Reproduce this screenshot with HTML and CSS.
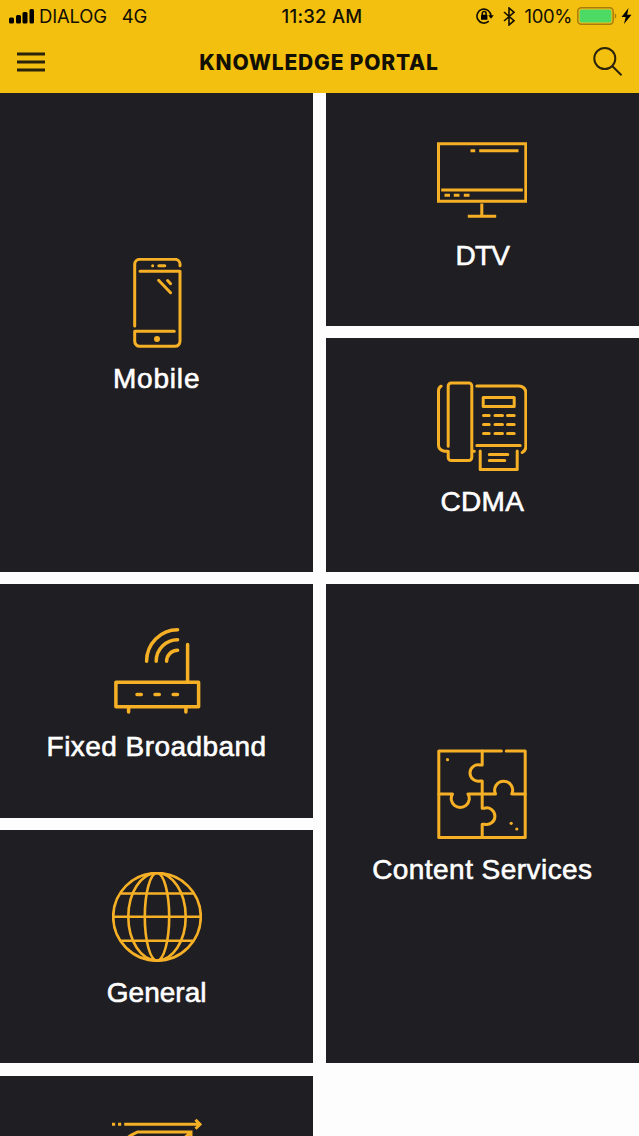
FILE: index.html
```html
<!DOCTYPE html>
<html lang="en">

<head>
    <meta charset="UTF-8">
    <meta name="viewport" content="width=device-width, initial-scale=1.0">
    <title>Knowledge Portal</title>
    <link rel="stylesheet" href="styles.css">
</head>

<body>
    <header class="header">
        <div class="status-bar">
            <div class="status-left">
                <svg class="signal" width="26" height="16" viewBox="0 0 26 16">
                    <rect x="0" y="9.500" width="5" height="6" rx="1.500" />
                    <rect x="7" y="7" width="5" height="8.500" rx="1.500" />
                    <rect x="13.500" y="4" width="5" height="11.500" rx="1.500" />
                    <rect x="20.500" y="1" width="4.500" height="14.500" rx="1.500" />
                </svg>
                <span class="carrier">DIALOG</span>
                <span class="network">4G</span>
            </div>
            <span class="clock">11:32 AM</span>
            <div class="status-right">
                <svg class="lock" width="18" height="18" viewBox="0 0 18 18">
                    <path class="thin" d="M12.800 14.200A7 7 0 1 1 15 9" />
                    <path d="M12.300 8.300h5.400L15 11.800z" />
                    <rect x="5" y="7.800" width="6.400" height="5" rx=".6" />
                    <path class="thin" d="M6.300 8V6.400a1.900 1.900 0 0 1 3.800 0V8" />
                </svg>
                <svg class="bluetooth" width="12" height="19" viewBox="0 0 12 19">
                    <path class="thin" d="M1 5l10 8.700-5 4.300V1l5 4.300L1 14" />
                </svg>
                <span class="percent">100%</span>
                <svg class="battery" width="40" height="18" viewBox="0 0 40 18">
                    <rect class="battery-case" x=".8" y=".8" width="35.400" height="16.400" rx="3.500" />
                    <rect class="battery-level" x="2.600" y="2.600" width="31.800" height="12.800" rx="2" />
                    <path class="battery-tip" d="M37.800 6.300c2 .6 2 4.800 0 5.400z" />
                </svg>
                <svg class="bolt" width="11" height="16" viewBox="0 0 11 16">
                    <path d="M7.500 0L.5 9h4.200L3 16l7.500-9.300H6.200z" />
                </svg>
            </div>
        </div>
        <div class="nav-bar">
            <svg class="menu" width="28" height="20" viewBox="0 0 28 20">
                <path d="M0 2h28M0 10h28M0 18h28" />
            </svg>
            <h1>KNOWLEDGE PORTAL</h1>
            <svg class="search" width="30" height="30" viewBox="0 0 30 30">
                <circle cx="11.800" cy="11.500" r="10.500" />
                <path d="M19.200 19l9.300 9.300" />
            </svg>
        </div>
    </header>

    <main class="tiles">
        <a class="tile tall">
            <svg class="icon round" viewBox="0 0 90 90">
                <path d="M22.700 68V6.300a5 5 0 0 1 5-5H63a5 5 0 0 1 5 5v1.500" />
                <path d="M28 13.300h40v70a5 5 0 0 1-5 5H27.700a5 5 0 0 1-5-5v-10h39.600" />
                <path d="M40.600 7.700h.1M46.800 7.700h6M46.600 22.300l12 12.400M55.600 22.500l3 3.200" />
                <circle class="dot" cx="45" cy="81" r="3" />
            </svg>
            <span class="label mobile">Mobile</span>
        </a>
        <a class="tile">
            <svg class="icon" viewBox="0 0 90 90">
                <path d="M1.500 8.700h87.300v57.600H1.500zM33.500 15.700h4.700M42.200 15.700h39.300M4.200 55h81.600" />
                <path d="M7.500 60.300h5.500M16.800 60.300h5.700M26.800 60.300h5.700" />
                <path d="M44.800 68.500v12.800M30.800 81.300h28.400" />
            </svg>
            <span class="label dtv">DTV</span>
        </a>
        <a class="tile">
            <svg class="icon round" viewBox="0 0 90 90">
                <path d="M11.200 65.200V4.900a3 3 0 0 1 3-3h17.600a3 3 0 0 1 3 3v71.600a3 3 0 0 1-3 3H14.200a3 3 0 0 1-3-3v-6.300H7.500Q1.500 69 1.500 64V10Q1.500 6.500 4.200 5.200" />
                <path d="M39.800 4.900h42Q88.800 5.500 88.800 12v54q0 3.500-3.600 5.500M39.800 64.500h43.400M36.500 70.200h.8" />
                <path d="M46.200 16.500h31v9h-31z" />
                <path d="M46.500 34.500h5.700M58 34.500h7.500M70.500 34.500h6.700M46.500 43.500h5.700M58 43.500h7.500M70.500 43.500h6.700M46.500 52.500h5.700M58 52.500h7.500M70.500 52.500h6.700" />
                <path d="M43.200 69.900v18.600h37V69.900M52.300 73.500h18.500M52.300 79.500h15.500" />
            </svg>
            <span class="label cdma">CDMA</span>
        </a>
        <a class="tile">
            <svg class="icon round router" viewBox="0 0 90 90">
                <path d="M3.900 56.200h82.700v24.600H3.900zM75.600 18.500v37.700M16.600 81v5M73.900 81v5" />
                <path d="M25 68.500h4.300M43 68.500h4.300M61.200 68.500h4.300" />
                <path d="M34.600 35.200A31 31.400 0 0 1 65.600 3.800M44.200 35.200a21.400 21.400 0 0 1 21.400-21.400M54.600 35.200a11 11 0 0 1 11-11" />
            </svg>
            <span class="label">Fixed Broadband</span>
        </a>
        <a class="tile tall">
            <svg class="icon round" viewBox="0 0 90 90">
                <path d="M64.400 2H1.800v86.500h86.400V2H69.200" />
                <path d="M45.200 2v14H43a8.200 8.200 0 1 0 0 16h2.200v27.200h2.200a8.300 8.300 0 1 1 0 16h-2.200v13.300" />
                <path d="M1.800 45h13.700A9 9 0 1 0 31 45h27.500A9 9 0 1 1 74.800 45h13.400" />
                <circle class="dot" cx="10.500" cy="10.700" r="1.600" />
                <circle class="dot" cx="74.200" cy="74.300" r="1.600" />
                <circle class="dot" cx="79.800" cy="80" r="1.600" />
            </svg>
            <span class="label">Content Services</span>
        </a>
        <a class="tile">
            <svg class="icon globe" viewBox="0 0 90 90">
                <circle cx="45" cy="44.800" r="43.800" />
                <ellipse cx="45" cy="44.800" rx="12.200" ry="43.800" />
                <ellipse cx="45" cy="44.800" rx="28.700" ry="43.800" />
                <path d="M8.500 21.500h73M1.200 44.800h87.600M8.500 68.800h73" />
            </svg>
            <span class="label general">General</span>
        </a>
        <a class="tile partial">
            <svg class="icon" viewBox="0 0 90 90">
                <path d="M0 6.300h3.200M6 6.300h3.200M12.200 6.300H88M83.500 1.800L88 6.300l-4.500 4.500" />
                <path d="M14 21L18.500 17.500 25.600 14H79v60L68 88V24L79 14M14 21v67h54" />
            </svg>
        </a>
    </main>
</body>

</html>
```

FILE: styles.css
```css
body {
    margin: 0;
    height: 1136px;
    overflow: hidden;
    background-color: #fdfdfd;
    font-family: "Liberation Sans", Arial, sans-serif;
}

.header {
    height: 92.700px;
    background-color: #f4c010;
    color: #120f04;
}

.status-bar {
    display: grid;
    grid-template-columns: 1fr auto 1fr;
    align-items: center;
    height: 32px;
    padding: 0 8px 0 9px;
    font-family: Inter, sans-serif;
    font-size: 18.500px;
}

.status-left,
.status-right {
    display: flex;
    align-items: center;
}

.status-right {
    justify-content: flex-end;
}

.carrier {
    margin-left: 4px;
    letter-spacing: -0.200px;
}

.network {
    margin-left: 15px;
    letter-spacing: -0.300px;
}

.clock {
    font-weight: 500;
    letter-spacing: 0.250px;
    padding-left: 4px;
}

.percent {
    letter-spacing: -0.400px;
}

.thin {
    fill: none;
    stroke: #120f04;
    stroke-width: 1.600;
}

.bluetooth {
    margin: 0 10px 0 9px;
}

.battery {
    margin: 0 4px 0 5px;
}

.battery-case {
    fill: none;
    stroke: #a77c0c;
    stroke-width: 1.500;
}

.battery-level {
    fill: #4cd964;
}

.battery-tip {
    fill: #a77c0c;
}

.bolt {
    margin-right: -1px;
}

.nav-bar {
    display: flex;
    align-items: center;
    justify-content: space-between;
    height: 60px;
    padding: 0 16px 0 17px;
}

.nav-bar h1 {
    margin: 1px 0 0;
    font-family: Inter, sans-serif;
    font-size: 21px;
    font-weight: 800;
    letter-spacing: 0.800px;
}

.menu,
.search {
    fill: none;
    stroke: #2b230a;
    stroke-width: 3;
}

.search {
    stroke-width: 2;
}

.tiles {
    display: grid;
    grid-template-columns: 1fr 1fr;
    grid-template-rows: repeat(4, 233.500px) 60.300px;
    gap: 12.250px 12.500px;
}

.tile {
    display: flex;
    flex-direction: column;
    align-items: center;
    justify-content: center;
    background-color: #1f1e22;
}

.tall {
    grid-row: span 2;
}

/* bottom row is only scrolled partly into view */
.partial {
    box-sizing: border-box;
    justify-content: flex-start;
    padding-top: 42.500px;
    overflow: hidden;
}

.icon {
    flex: none;
    width: 90px;
    height: 90px;
    fill: none;
    stroke: #f6b026;
    stroke-width: 3;
}

.round {
    stroke-linecap: round;
    stroke-linejoin: round;
}

.router {
    stroke-width: 3.500;
}

.globe {
    stroke-width: 2.600;
}

.dot {
    fill: #f6b026;
    stroke: none;
}

.label {
    margin: 14px 0 11px;
    color: #fff;
    font-size: 28px;
    line-height: 34px;
    letter-spacing: 0.450px;
    -webkit-text-stroke: 0.600px #fff;
}

.mobile {
    letter-spacing: 0.800px;
}

.dtv {
    letter-spacing: -0.700px;
}

.cdma {
    letter-spacing: 0.300px;
}

.general {
    letter-spacing: 0;
}
```
